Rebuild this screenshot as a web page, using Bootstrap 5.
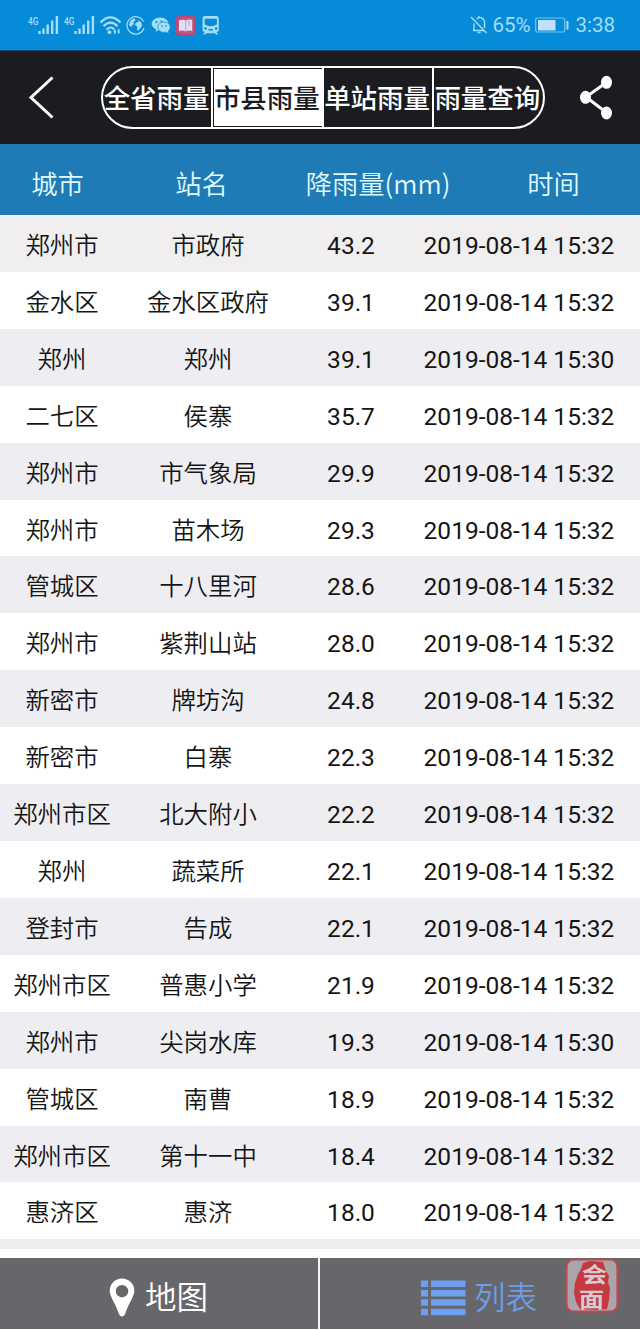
<!DOCTYPE html>
<html lang="zh-CN">
<head>
<meta charset="utf-8">
<meta name="viewport" content="width=device-width, initial-scale=1">
<title>市县雨量</title>
<link href="https://cdn.jsdelivr.net/npm/bootstrap@5.3.0/dist/css/bootstrap.min.css" rel="stylesheet">
<script src="https://cdn.jsdelivr.net/npm/bootstrap@5.3.0/dist/js/bootstrap.bundle.min.js" defer></script>
<style>
body{font-family:Roboto,"Noto Sans CJK SC",sans-serif;width:640px;height:1330px;overflow:hidden;background:#fff;color:#151515}
svg{display:block;flex:none}
.status{height:51px;background:#068bd9;color:#a5dcf6;font-size:20.5px;padding-left:28px;padding-right:25px;border-bottom:1px solid #0d4468}
.status .clock{margin-left:5px}
.topbar{height:93px;background:#1b1c20;padding-left:27px;padding-right:27px}
.seg{width:444px;height:63px;border:2px solid #fff;border-radius:32px;overflow:hidden;margin-left:47px}
.seg a{flex:1 1 0;font:500 26.5px/59px "Noto Sans CJK SC",sans-serif;color:#fff;text-decoration:none;text-align:center;white-space:nowrap;display:flex;justify-content:center}
.seg a span{position:relative;left:-1px;top:-1px}
.seg a+a{border-left:2px solid #fff;margin-left:-1px}
.seg a.on{background:#fff;color:#1b1c20;box-shadow:inset 1px 1px #1b1c20,inset -1px -1px #1b1c20}
.thead-row{display:grid;grid-template-columns:115px 173px 180px 171px;height:71px;background:#1e7bb6;color:#e0fbff;font:350 26.3px/78px "Noto Sans CJK SC",sans-serif;text-align:center}
.rain{height:1043px;overflow:hidden}
.rain-row{display:grid;grid-template-columns:124px 168px 118px 218px;height:56.92px;line-height:62px;font-size:24.5px;text-align:center;white-space:nowrap}
.rain-row:nth-child(odd){background:#eeedf2}
.rain-row:first-child{background:#f0eeef}
.rain-row:last-child{height:10px}
.rain-row span:nth-child(-n+2){font:350 24.4px/58px "Noto Sans CJK SC",sans-serif}
.tabs{height:71px;background:#67666b;color:#fff;font:350 31.5px/76px "Noto Sans CJK SC",sans-serif}
.tabs .half{height:71px;width:320px}
.half.map{border-right:2px solid #f4f4f6;padding-left:109px;gap:10px}
.half.list{color:#6d9ce9;padding-left:101px;gap:8px}
.tabs span{padding-top:2px}
.seal{left:565px;top:1258px;overflow:visible}
</style>
</head>
<body>
<header class="status d-flex align-items-center justify-content-between">
<svg width="200" height="50" viewBox="28 0 200 50" fill="#a5dcf6" stroke="none">
<g id="signal"><text x="28" y="24.500" font-size="11.500" font-weight="500" textLength="10.500" lengthAdjust="spacingAndGlyphs">4G</text>
<path d="M38.300 31h2.400v3h-2.400zM42.300 28.500h2.400v5.500h-2.400zM46.500 24.500h2.400v9.500h-2.400zM51 20.500h2.400v13.500h-2.400zM55.700 16h2.400v18h-2.400z"/></g>
<use href="#signal" x="36"/>
<g fill="none" stroke="#a5dcf6" stroke-width="2.200"><path d="M100.500 22.500Q110.500 12.500 120.500 22.500M103.500 26.300Q110.500 19 117.500 26.300M106.500 29.800Q110.500 25.500 114 29.300"/></g>
<circle cx="109.500" cy="32.200" r="1.900"/><path d="M113 31.500l1.900-2.500 1.700 2.500h-1v2.500h-1.500v-2.500zM117 31.500h1v-2.500h1.500v2.500h1l-1.700 2.500z"/>
<path d="M143.500 21.500A8.700 8.700 0 1 0 144 28" fill="none" stroke="#a5dcf6" stroke-width="1.300"/><path d="M129.500 23q1-4 5-4.500l1 1.700-2.500 2.300 1.500 1.500-2.500 1v2l-3-1.500zM138 20l3.500 2.500.5 3.500-3.500 4.500-1.700-1 .7-2.500-2.500-2 1-2.500 2.500-.5z"/>
<path d="M160 17.500c5 0 8.300 3 8.600 6-5 .2-8.500 3-8 6.700l-2.100.1-2.900 1.500.6-2.400c-2.800-1.200-4.500-3.300-4.500-5.400 0-3.500 3.500-6.500 8.300-6.500z"/><ellipse cx="164" cy="27.200" rx="6.300" ry="5.200" stroke="#068bd9" stroke-width=".7"/><path d="M165 31.500l3-.8.500 2.300z"/>
<g fill="#068bd9"><circle cx="156.500" cy="22" r="1"/><circle cx="161.500" cy="21.500" r="1"/><circle cx="162" cy="26" r=".8"/><circle cx="166" cy="26" r=".8"/></g>
<rect x="176.800" y="16.800" width="17.500" height="17.500" rx="2" fill="#b95a86" stroke="#c2466f" stroke-width="1.800"/><path d="M179 20.500q4-1.500 6.700 0 3-1.500 6.500-.5v11q-3.500-1-6.500.5-3-1.500-6.700-.5z" fill="#e1def3"/><path d="M185.700 20.500v11M189 20v6" stroke="#ad7fa8" stroke-width=".7"/>
<path fill-rule="evenodd" d="M205 16h11.500q2.300 0 2.300 2.500v11q0 2.500-2.500 2.500l2 2.500h-2.500l-1-1.200h-8.500l-1 1.200h-2.500l2-2.500q-2.300 0-2.300-2.500v-11q0-2.500 2.500-2.500zm-.3 2.800v5.700q6 3.500 12.200 0v-5.700zM205.500 27.200a1.300 1.300 0 1 0 .1 2.600 1.300 1.300 0 0 0-.1-2.600zm10.600 0a1.300 1.300 0 1 0 .1 2.600 1.300 1.300 0 0 0-.1-2.600zM208.500 29v1.500h4.500V29z"/>
</svg>
<div class="d-flex align-items-center">
<svg width="18" height="20" viewBox="0 0 18 20" fill="none" stroke="#a5dcf6" stroke-width="1.400"><path d="M1 2l15.500 16M3 15.500h11.500M4 15V8.500M6.500 4q5.500-3.500 8 2v7M7.500 17.500h3M9 1v2"/></svg>
<span class="ms-1">65%</span>
<svg class="ms-1" width="36" height="18" viewBox="0 0 36 18"><rect x="1.700" y="2" width="29" height="14" rx="1.500" fill="none" stroke="#75c8ef" stroke-width="1.200"/><rect x="4" y="4" width="17.500" height="10.500" fill="#bfe0fb"/><rect x="32.500" y="5" width="2" height="8.500" fill="#a5dcf6"/></svg>
<span class="clock">3:38</span>
</div>
</header>
<nav class="topbar d-flex align-items-center">
<svg width="27" height="44" viewBox="0 0 27 44" fill="none" stroke="#fff" stroke-width="3"><path d="M25.500 1.500L4 21.500 25.500 41.500"/></svg>
<div class="seg d-flex"><a href="#"><span>全省雨量</span></a><a href="#" class="on"><span>市县雨量</span></a><a href="#"><span>单站雨量</span></a><a href="#"><span>雨量查询</span></a></div>
<svg class="ms-auto" width="34" height="46" viewBox="0 0 34 46" fill="#fff"><path d="M28 7L7 22l21 16" fill="none" stroke="#fff" stroke-width="3"/><ellipse cx="27.500" cy="7.300" rx="5.500" ry="6.500"/><ellipse cx="6.500" cy="22.300" rx="5.500" ry="6.500"/><ellipse cx="27.500" cy="38" rx="5.500" ry="6.500"/></svg>
</nav>
<main>
<div class="thead-row"><span>城市</span><span>站名</span><span>降雨量(mm)</span><span>时间</span></div>
<div class="rain">
<div class="rain-row"><span>郑州市</span><span>市政府</span><span>43.2</span><span>2019-08-14 15:32</span></div>
<div class="rain-row"><span>金水区</span><span>金水区政府</span><span>39.1</span><span>2019-08-14 15:32</span></div>
<div class="rain-row"><span>郑州</span><span>郑州</span><span>39.1</span><span>2019-08-14 15:30</span></div>
<div class="rain-row"><span>二七区</span><span>侯寨</span><span>35.7</span><span>2019-08-14 15:32</span></div>
<div class="rain-row"><span>郑州市</span><span>市气象局</span><span>29.9</span><span>2019-08-14 15:32</span></div>
<div class="rain-row"><span>郑州市</span><span>苗木场</span><span>29.3</span><span>2019-08-14 15:32</span></div>
<div class="rain-row"><span>管城区</span><span>十八里河</span><span>28.6</span><span>2019-08-14 15:32</span></div>
<div class="rain-row"><span>郑州市</span><span>紫荆山站</span><span>28.0</span><span>2019-08-14 15:32</span></div>
<div class="rain-row"><span>新密市</span><span>牌坊沟</span><span>24.8</span><span>2019-08-14 15:32</span></div>
<div class="rain-row"><span>新密市</span><span>白寨</span><span>22.3</span><span>2019-08-14 15:32</span></div>
<div class="rain-row"><span>郑州市区</span><span>北大附小</span><span>22.2</span><span>2019-08-14 15:32</span></div>
<div class="rain-row"><span>郑州</span><span>蔬菜所</span><span>22.1</span><span>2019-08-14 15:32</span></div>
<div class="rain-row"><span>登封市</span><span>告成</span><span>22.1</span><span>2019-08-14 15:32</span></div>
<div class="rain-row"><span>郑州市区</span><span>普惠小学</span><span>21.9</span><span>2019-08-14 15:32</span></div>
<div class="rain-row"><span>郑州市</span><span>尖岗水库</span><span>19.3</span><span>2019-08-14 15:30</span></div>
<div class="rain-row"><span>管城区</span><span>南曹</span><span>18.9</span><span>2019-08-14 15:32</span></div>
<div class="rain-row"><span>郑州市区</span><span>第十一中</span><span>18.4</span><span>2019-08-14 15:32</span></div>
<div class="rain-row"><span>惠济区</span><span>惠济</span><span>18.0</span><span>2019-08-14 15:32</span></div>
<div class="rain-row"></div>
</div>
</main>
<footer class="tabs d-flex">
<div class="half map d-flex align-items-center"><svg class="mt-2" width="26" height="39" viewBox="0 0 26 39"><path fill="#fff" fill-rule="evenodd" d="M13 .5a12.300 12.300 0 0 1 12.300 12.300c0 6-5.500 12-9.300 23.500q-1 2.200-3 2.200t-3-2.200C6.200 24.800.7 18.800.7 12.800A12.300 12.300 0 0 1 13 .5zm0 6.500a6.200 6.200 0 1 0 0 12.400A6.200 6.200 0 0 0 13 7z"/></svg><span>地图</span></div>
<div class="half list d-flex align-items-center"><svg class="mt-2" width="45" height="36" viewBox="0 0 45 36" fill="#6da0f2"><path d="M0 .5h7v6.500H0zM10 .5h34.500v6.500H10zM0 10h7v6.500H0zM10 10h34.500v6.500H10zM0 19.300h7v6.500H0zM10 19.300h34.500v6.500H10zM0 28.800h7v6.500H0zM10 28.800h34.500v6.500H10z"/></svg><span>列表</span></div>
</footer>
<svg class="seal position-absolute" width="54" height="55" viewBox="0 0 54 55"><rect x="1.500" y="1.500" width="51" height="52" rx="7" fill="#aaa5aa" stroke="#b94b51" stroke-width="2.200"/><path d="M18 5l7-2 13 1 3 9 3 5-1 6 2 6-1 12-2 9-10 1-17-1-4-7-2-9 1-10 3-9 3-5z" fill="#c43a40"/><g fill="#d6cbd0" font-family="Liberation Sans, Noto Sans CJK SC, sans-serif" font-weight="700" font-size="21" text-anchor="middle"><text x="29.500" y="24" textLength="25" lengthAdjust="spacingAndGlyphs">会</text><text x="26.500" y="49" textLength="25" lengthAdjust="spacingAndGlyphs">面</text></g></svg>
</body>
</html>
